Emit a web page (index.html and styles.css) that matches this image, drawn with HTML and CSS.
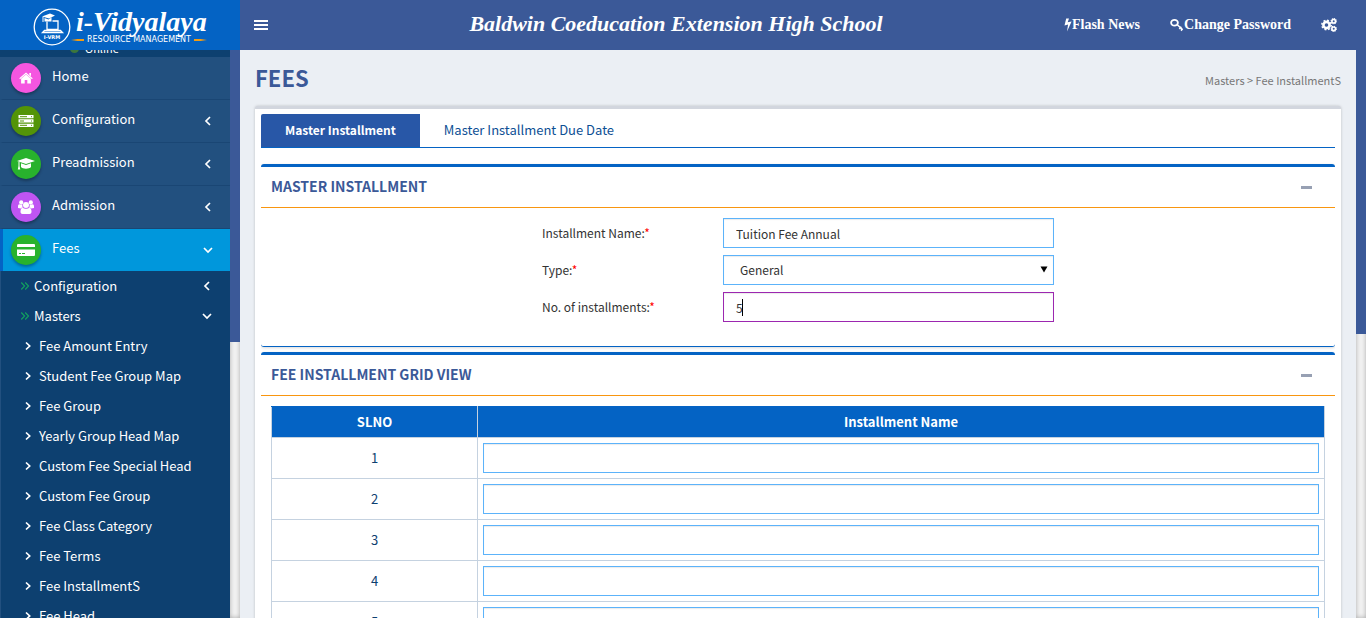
FILE: index.html
```html
<!DOCTYPE html>
<html lang="en">
<head>
<meta charset="utf-8">
<title>Fees - i-Vidyalaya</title>
<meta name="viewport" content="width=device-width, initial-scale=1">
<link rel="stylesheet" href="styles.css">
</head>
<body>
<svg class="defs" aria-hidden="true">
  <symbol id="left" viewBox="0 0 10 10"><path d="M7 1 3 5l4 4" fill="none" stroke="currentColor" stroke-width="1.7"/></symbol>
  <symbol id="down" viewBox="0 0 10 10"><path d="M1 3l4 4 4-4" fill="none" stroke="currentColor" stroke-width="1.7"/></symbol>
  <symbol id="right" viewBox="0 0 10 10"><path d="M3 1.5 6.7 5 3 8.5" fill="none" stroke="currentColor" stroke-width="1.7"/></symbol>
  <symbol id="double" viewBox="0 0 10 10"><path d="M1.3 1.5 4.6 5 1.3 8.5M5.2 1.5 8.5 5 5.2 8.5" fill="none" stroke="currentColor" stroke-width="1.2"/></symbol>
</svg>
<header class="header">
  <a class="brand" href="#">
    <svg class="brand-seal" viewBox="0 0 38 38" aria-hidden="true">
      <circle cx="19" cy="19" r="17.8" fill="none" stroke="#fff" stroke-width="1.3"/>
      <path d="M9 8.500 17 5.500l5 2-6 3zM11.500 10v3.500h7V9.500l-3 2z" fill="#fff"/>
      <path d="M10 9v5" stroke="#fff" stroke-width="1"/>
      <path d="M14 13.500v8h11v-8.500h-5.500M11.500 22.500h16l2 2H9.500z" fill="none" stroke="#fff" stroke-width="1.300"/>
      <text x="19" y="31" text-anchor="middle" class="seal-text">I-VRM</text>
    </svg>
    <span class="brand-words">
      <span class="brand-name">i-Vidyalaya</span>
      <span class="brand-sub">RESOURCE MANAGEMENT</span>
    </span>
  </a>
  <button class="toggle" type="button" aria-label="Toggle navigation"><svg viewBox="0 0 14 12"><path d="M0 2h14M0 6h14M0 10h14" stroke="currentColor" stroke-width="2"/></svg></button>
  <div class="school">Baldwin Coeducation Extension High School</div>
  <nav class="top-links">
    <a href="#"><svg class="bolt" viewBox="0 0 8 14"><path d="M2.200.5H5L3.700 4.300 7.600 3.500 3 13.500 4.100 6.600.5 7.500z" fill="currentColor"/></svg>Flash News</a>
    <a href="#"><svg class="key" viewBox="0 0 14 14"><ellipse cx="4.500" cy="4.800" rx="3.400" ry="2.900" fill="none" stroke="currentColor" stroke-width="1.800"/><path d="M7 6.500 12.500 11.500M9.300 11l2-2.300M11 12.600l1.600-1.800" fill="none" stroke="currentColor" stroke-width="1.600"/></svg>Change Password</a>
    <a href="#" aria-label="Settings"><svg class="cogs" viewBox="0 0 16 14"><circle cx="5.500" cy="7" r="3.100" fill="none" stroke="currentColor" stroke-width="2.600"/><circle cx="5.500" cy="7" r="4.700" fill="none" stroke="currentColor" stroke-width="1.500" stroke-dasharray="1.900 1.790"/><circle cx="12.700" cy="3.200" r="1.800" fill="none" stroke="currentColor" stroke-width="1.600"/><circle cx="12.700" cy="3.200" r="2.600" fill="none" stroke="currentColor" stroke-width="1.100" stroke-dasharray="1.100 .94"/><circle cx="12.700" cy="10.800" r="1.800" fill="none" stroke="currentColor" stroke-width="1.600"/><circle cx="12.700" cy="10.800" r="2.600" fill="none" stroke="currentColor" stroke-width="1.100" stroke-dasharray="1.100 .94"/></svg></a>
  </nav>
</header>
<div class="layout">
  <aside class="sidebar">
    <div class="status"><i></i><span>Online</span></div>
    <nav class="menu">
      <a class="item" href="#"><span class="disc pink"><svg viewBox="0 0 14 12"><path d="M7 .5 13.700 6.300l-.7.900L7 2 1 7.200.3 6.300zM10.300 1h1.700v3.300l-1.700-1.500zM7 2.600l4.900 4.200v4.700H8.300V8H5.700v3.500H2.100V6.800z" fill="#fff"/></svg></span><span class="label">Home</span></a>
      <a class="item" href="#"><span class="disc olive"><svg viewBox="0 0 16 12"><path d="M.5 0h15v3.300H.5zM.5 4.300h15v3.300H.5zM.5 8.700h15V12H.5z" fill="#fff"/><path d="M2 1.700h7M2 6h4M2 10.300h7M13 1.700h1M13 6h1M13 10.300h1" stroke="#539408" stroke-width="1"/></svg></span><span class="label">Configuration</span><svg class="arrow"><use href="#left"/></svg></a>
      <a class="item" href="#"><span class="disc green"><svg class="wide" viewBox="0 0 18 12"><path d="M9 0l9 3-9 3-9-3zM4 5.300 9 7l5-1.700V9c-1.500 2.300-8.500 2.300-10 0zM1.500 4h1v4l.8 3.500H.8L1.500 8z" fill="#fff"/></svg></span><span class="label">Preadmission</span><svg class="arrow"><use href="#left"/></svg></a>
      <a class="item" href="#"><span class="disc purple"><svg class="crowd" viewBox="0 0 16 14"><g fill="#fff"><circle cx="3.200" cy="2.400" r="2.100"/><circle cx="12.800" cy="2.400" r="2.100"/><path d="M0 8V6.500C0 4.500 1 4 2 4.500h2.500C4 6 4.500 7 5 7.800H3.500L3 8.500zM16 8V6.500c0-2-1-2.500-2-2h-2.500c.5 1.500 0 2.500-.5 3.300h1.500l.5.700z"/><circle cx="8" cy="5" r="3"/><path d="M5 7.700C3.300 7.700 2.500 9 2.500 11.500 2.500 13 3 14 4.500 14h7c1.500 0 2-1 2-2.500 0-2.500-.8-3.800-2.500-3.800C10 9 6 9 5 7.700z"/></g></svg></span><span class="label">Admission</span><svg class="arrow"><use href="#left"/></svg></a>
      <a class="item active" href="#"><span class="disc green"><svg class="wide" viewBox="0 0 18 12"><path d="M1 0h16q1 0 1 1v2H0V1q0-1 1-1zM0 5.500h18V11q0 1-1 1H1q-1 0-1-1z" fill="#fff"/><path d="M2 9.500h2M5 9.500h3" stroke="#28b22d"/></svg></span><span class="label">Fees</span><svg class="arrow"><use href="#down"/></svg></a>
    </nav>
    <nav class="submenu">
      <a class="sub" href="#"><svg class="dbl"><use href="#double"/></svg><span class="label">Configuration</span><svg class="arrow"><use href="#left"/></svg></a>
      <a class="sub" href="#"><svg class="dbl"><use href="#double"/></svg><span class="label">Masters</span><svg class="arrow"><use href="#down"/></svg></a>
      <a class="leaf" href="#"><svg><use href="#right"/></svg>Fee Amount Entry</a>
      <a class="leaf" href="#"><svg><use href="#right"/></svg>Student Fee Group Map</a>
      <a class="leaf" href="#"><svg><use href="#right"/></svg>Fee Group</a>
      <a class="leaf" href="#"><svg><use href="#right"/></svg>Yearly Group Head Map</a>
      <a class="leaf" href="#"><svg><use href="#right"/></svg>Custom Fee Special Head</a>
      <a class="leaf" href="#"><svg><use href="#right"/></svg>Custom Fee Group</a>
      <a class="leaf" href="#"><svg><use href="#right"/></svg>Fee Class Category</a>
      <a class="leaf" href="#"><svg><use href="#right"/></svg>Fee Terms</a>
      <a class="leaf" href="#"><svg><use href="#right"/></svg>Fee InstallmentS</a>
      <a class="leaf" href="#"><svg><use href="#right"/></svg>Fee Head</a>
    </nav>
  </aside>
  <div class="scroll side-scroll" aria-hidden="true"><div class="thumb"></div></div>
  <main class="content">
    <div class="heading">
      <h1>FEES</h1>
      <div class="crumbs">Masters &gt; Fee InstallmentS</div>
    </div>
    <div class="card">
      <div class="tabs">
        <a class="tab selected" href="#">Master Installment</a>
        <a class="tab" href="#">Master Installment Due Date</a>
      </div>
      <section class="panel">
        <div class="panel-head"><h2>MASTER INSTALLMENT</h2><button type="button" aria-label="Collapse"><i></i></button></div>
        <form class="form">
          <label for="name">Installment Name:<b>*</b></label>
          <input class="field" id="name" type="text" value="Tuition Fee Annual">
          <label for="type">Type:<b>*</b></label>
          <div class="pick"><select class="field" id="type"><option>General</option></select><svg viewBox="0 0 8 7"><path d="M.5.500h7L4 6.500z"/></svg></div>
          <label for="count">No. of installments:<b>*</b></label>
          <div class="typing"><input class="field focus" id="count" type="text" value="5"><i class="caret"></i></div>
        </form>
      </section>
      <section class="panel">
        <div class="panel-head"><h2>FEE INSTALLMENT GRID VIEW</h2><button type="button" aria-label="Collapse"><i></i></button></div>
        <div class="grid">
          <table>
            <thead><tr><th class="num">SLNO</th><th>Installment Name</th></tr></thead>
            <tbody>
              <tr><td>1</td><td><input class="field" type="text" aria-label="Installment name 1"></td></tr>
              <tr><td>2</td><td><input class="field" type="text" aria-label="Installment name 2"></td></tr>
              <tr><td>3</td><td><input class="field" type="text" aria-label="Installment name 3"></td></tr>
              <tr><td>4</td><td><input class="field" type="text" aria-label="Installment name 4"></td></tr>
              <tr><td>5</td><td><input class="field" type="text" aria-label="Installment name 5"></td></tr>
            </tbody>
          </table>
        </div>
      </section>
    </div>
  </main>
  <div class="scroll page-scroll" aria-hidden="true"><div class="thumb"></div></div>
</div>
</body>
</html>
```
FILE: styles.css
```css
* { box-sizing: border-box; }
body {
  margin: 0;
  height: 100vh;
  overflow: hidden;
  display: flex;
  flex-direction: column;
  font: 13px/20px "Noto Sans CJK SC", "Noto Sans", sans-serif;
  color: #333;
}
a { color: inherit; text-decoration: none; }
button { background: none; border: 0; padding: 0; color: inherit; }
h1, h2 { margin: 0; color: #3b5998; font-weight: 700; }
svg { display: block; flex: none; }
.defs { position: absolute; width: 0; height: 0; }

.header { flex: none; display: flex; align-items: center; height: 50px; background: #3b5998; color: #fff; }
.brand { display: flex; align-items: center; gap: 5px; width: 240px; height: 50px; padding: 4px 0 0 33px; background: #0463c4; }
.brand-seal { width: 38px; height: 38px; }
.seal-text { font: 700 5px "DejaVu Sans", sans-serif; fill: #fff; }
.brand-words { display: flex; flex-direction: column; }
.brand-name { font: italic 700 28px/26px "Liberation Serif", serif; }
.brand-sub { display: flex; align-items: center; gap: 3px; margin-left: -5px; font: 8px/10px "DejaVu Sans", sans-serif; white-space: nowrap; }
.brand-sub::before, .brand-sub::after { content: ""; width: 13px; height: 2px; background: linear-gradient(to left, #f39c12 50%, transparent); }
.brand-sub::after { background: linear-gradient(to right, #f39c12 50%, transparent); }
.toggle { margin-left: 14px; }
.toggle svg { width: 14px; height: 12px; }
.school { flex: 1; padding-left: 20px; text-align: center; font: italic 700 22px/28px "Liberation Serif", serif; white-space: nowrap; padding-bottom: 2px; }
.top-links { display: flex; align-items: center; gap: 30px; padding-right: 29px; font: 700 14px/20px "Liberation Serif", serif; white-space: nowrap; }
.top-links a { display: flex; align-items: center; }
.bolt { width: 8px; height: 14px; }
.key { width: 14px; height: 14px; }
.cogs { width: 16px; height: 14px; }

.layout { flex: 1; min-height: 0; display: flex; }
.sidebar { flex: none; width: 230px; overflow: hidden; background: #0d4070; color: #fff; }
.status { display: flex; align-items: flex-end; gap: 6px; height: 7px; padding-left: 70px; overflow: hidden; font-size: 11px; line-height: 18px; }
.status i { width: 9px; height: 9px; margin-bottom: 4px; border-radius: 50%; background: #3c763d; }
.status span { height: 18px; }
.menu { background: #22507f; }
.item { display: flex; align-items: center; height: 43px; padding: 0 17px 0 8px; border-left: 3px solid transparent; border-bottom: 1px solid #1a4674; }
.item .label { flex: 1; padding-bottom: 4px; }
.item.active { height: 42px; border-bottom: 0; border-left-color: #0463c4; background: #0097dc; }
.arrow { width: 10px; height: 10px; }
.disc { display: flex; align-items: center; justify-content: center; width: 30px; height: 30px; margin-right: 11px; border-radius: 50%; box-shadow: 0 2px 3px rgba(0, 0, 0, .3); }
.disc svg { width: 14px; height: 12px; }
.disc svg.wide { width: 18px; }
.disc svg.crowd { width: 16px; height: 14px; }
.pink { background: #f556e0; }
.olive { background: #539408; }
.disc.olive svg { width: 16px; }
.green { background: #28b22d; }
.purple { background: #bf55f2; }
.submenu { border-left: 1px solid #22507f; }
.sub, .leaf { display: flex; align-items: center; height: 30px; }
.sub { padding: 0 18px 0 19px; }
.sub .label { flex: 1; }
.dbl { width: 10px; height: 10px; margin-right: 4px; color: #12a05f; }
.leaf { padding-left: 22px; gap: 6px; }
.leaf svg { width: 10px; height: 10px; }

.scroll { flex: none; width: 10px; background: #f3f3f3; box-shadow: inset 0 0 5px rgba(0, 0, 0, .3); }
.thumb { background: #3b5998; }
.side-scroll .thumb { height: 51.4%; }
.page-scroll .thumb { height: 50%; }

.content { flex: 1; min-width: 0; overflow: hidden; padding: 15px 15px 0; background: #ebeff4; }
.heading { display: flex; justify-content: space-between; align-items: center; height: 41px; padding-bottom: 17px; }
h1 { font-size: 22px; line-height: 26px; }
.crumbs { padding-top: 6px; font-size: 11px; color: #777; }
.card { padding: 5px 6px; border-top: 3px solid #d2d6de; border-radius: 3px; background: #fff; box-shadow: 0 0 3px rgba(0, 0, 0, .2); }
.tabs { display: flex; margin-bottom: 16px; border-bottom: 1px solid #0463c4; }
.tab { padding: 6px 24px 7px; color: #0d4f94; }
.tab.selected { background: #2857a7; color: #fff; font-size: 12px; font-weight: 700; border-radius: 2px 0 0; }
.panel { margin-bottom: 5px; border-top: 3px solid #0463c4; border-bottom: 1px solid #0463c4; border-radius: 3px; box-shadow: 0 1px 3px rgba(0, 0, 0, .15); clip-path: inset(-2px 0 -6px); }
.panel-head { display: flex; justify-content: space-between; align-items: center; height: 41px; padding: 0 23px 0 10px; border-bottom: 1px solid #f9960f; }
h2 { padding-bottom: 2px; font-size: 14px; line-height: 20px; }
.panel-head i { display: block; width: 11px; height: 3px; background: #97a0b3; }
.form { display: grid; grid-template-columns: 181px 1fr; gap: 7px 0; align-items: center; max-width: 512px; margin: 0 auto; padding: 10px 0 24px; }
.form label { font-size: 12px; }
.form b { color: #f00; font-weight: 400; }
.field { display: block; width: 100%; height: 30px; padding: 0 12px; border: 1px solid #5cb3fa; border-radius: 0; background: #fff; box-shadow: inset 0 1px 1px rgba(0, 0, 0, .08); font: 12px/20px "Noto Sans CJK SC", "Noto Sans", sans-serif; color: #333; outline: 0; }
.field.focus { border-color: #9c27b0; }
.pick, .typing { position: relative; }
select.field { appearance: none; padding-left: 16px; }
.pick svg { position: absolute; right: 6px; top: 11px; width: 8px; height: 7px; pointer-events: none; }
.caret { position: absolute; left: 19px; top: 7px; width: 1px; height: 17px; background: #000; }
.grid { padding: 10px; }
table { width: 100%; border-collapse: collapse; table-layout: fixed; }
th, td { border: 1px solid #c5d2e0; padding: 5px; text-align: center; color: #0d4070; }
th { height: 31px; border-top-color: #0463c4; background: #0463c4; color: #fff; font-weight: 700; }
.num { width: 206px; }
```
